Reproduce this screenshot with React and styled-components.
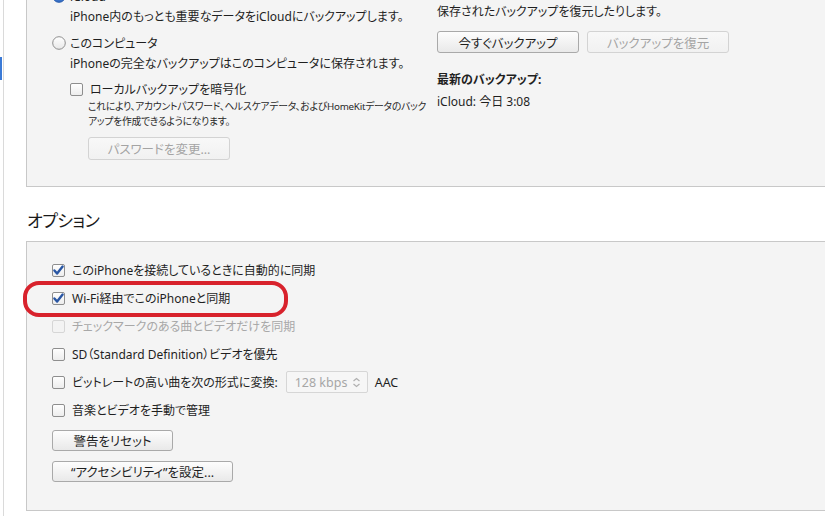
import React from 'react';
import styled, { createGlobalStyle } from 'styled-components';

const GlobalStyle = createGlobalStyle`
  html, body {
    margin: 0;
    padding: 0;
    background: #ffffff;
    overflow: hidden;
  }
  body {
    font-family: "Noto Sans", "Noto Sans CJK JP", sans-serif;
    font-feature-settings: "palt";
    color: #1f1f1f;
  }
`;

const Window = styled.div`
  display: flex;
  height: 516px;
  overflow: hidden;
`;

const Sidebar = styled.div`
  width: 3px;
  flex-shrink: 0;
  border-right: 1px solid #dadada;
  display: flex;
  flex-direction: column;
`;

const Indicator = styled.div`
  margin-top: 57px;
  width: 2px;
  height: 23px;
  background: #3b7ad6;
`;

const Main = styled.div`
  flex: 1;
  padding-left: 22px;
  margin-right: -12px;
`;

const Panel = styled.div`
  background: #f4f4f4;
  border: 1px solid #c8c8c8;
`;

const BackupPanel = styled(Panel)`
  margin-top: -30px;
  padding: 9px 0 26px 25px;
  display: flex;
  align-items: flex-start;
`;

const Column = styled.div`
  display: flex;
  flex-direction: column;
  align-items: flex-start;
  flex-shrink: 0;
  width: ${p => p.width || 'auto'};
  margin-top: ${p => p.offset || 0}px;
`;

const ChoiceRow = styled.div`
  display: flex;
  align-items: center;
  height: 20px;
  gap: ${p => p.gap || 4}px;
  margin-top: ${p => p.space || 0}px;
  margin-left: ${p => p.indent || 0}px;
  font-size: 12px;
  white-space: nowrap;
`;

const Description = styled.div`
  padding-left: ${p => p.indent || 0}px;
  font-size: 12px;
  line-height: ${p => p.lineHeight || 22}px;
  white-space: nowrap;
`;

const Note = styled.div`
  padding-left: 36px;
  font-size: 9.8px;
  letter-spacing: -0.25px;
  line-height: 15px;
  white-space: nowrap;
  color: #2a2a2a;
`;

const Strong = styled.div`
  margin-top: ${p => p.space || 0}px;
  font-size: 12px;
  font-weight: 700;
  line-height: 22px;
`;

const ButtonRow = styled.div`
  display: flex;
  gap: 8px;
  margin-top: 9px;
`;

const Button = styled.button`
  box-sizing: border-box;
  width: ${p => p.width}px;
  height: ${p => p.height || 22}px;
  margin-left: ${p => p.indent || 0}px;
  margin-top: ${p => p.space || 0}px;
  padding: 0;
  font-family: inherit;
  font-feature-settings: "palt";
  font-size: 12.5px;
  color: ${p => (p.disabled ? '#a4a4a4' : '#1f1f1f')};
  border: 1px solid ${p => (p.disabled ? '#d3d3d3' : '#a9a9a9')};
  border-radius: 3px;
  background: ${p =>
    p.disabled
      ? 'linear-gradient(#f8f8f8, #f1f1f1)'
      : 'linear-gradient(#fdfdfd, #e9e9e9)'};
  display: block;
`;

const SectionTitle = styled.h2`
  margin: 20px 0 6px 1px;
  font-size: 17px;
  font-weight: 400;
  letter-spacing: -0.5px;
  line-height: 28px;
  color: #1a1a1a;
`;

const OptionsPanel = styled(Panel)`
  padding: 14px 0 28px 25px;
  display: flex;
  flex-direction: column;
  align-items: flex-start;
`;

const OptionRow = styled.div`
  position: relative;
  display: flex;
  align-items: center;
  height: 28px;
  gap: 7px;
  font-size: 12px;
  white-space: nowrap;
  color: ${p => (p.disabled ? '#a8a8a8' : '#1f1f1f')};
`;

const Annotation = styled.div`
  position: absolute;
  left: -29px;
  top: -3px;
  width: 265px;
  height: 36px;
  box-sizing: border-box;
  border: 4.5px solid #d8222c;
  border-radius: 16px;
  pointer-events: none;
`;

const Select = styled.div`
  box-sizing: border-box;
  display: flex;
  align-items: center;
  justify-content: space-between;
  width: 82px;
  height: 22px;
  margin-left: 1px;
  padding: 0 6px 0 8px;
  border: 1px solid #d6d6d6;
  border-radius: 2px;
  background: #f6f6f6;
  color: #a6a6a6;
  font-size: 12.5px;
`;

const Suffix = styled.span`
  font-size: 12.5px;
`;

const Checkbox = ({ checked, disabled }) => (
  <svg width="13" height="13" viewBox="0 0 13 13" style={{ flexShrink: 0 }}>
    <defs>
      <linearGradient id="cbg" x1="0" y1="0" x2="0" y2="1">
        <stop offset="0" stopColor="#ffffff" />
        <stop offset="1" stopColor="#ececec" />
      </linearGradient>
    </defs>
    <rect
      x="0.5"
      y="0.5"
      width="12"
      height="12"
      rx="1.5"
      fill={disabled ? '#f3f3f3' : 'url(#cbg)'}
      stroke={disabled ? '#d6d6d6' : '#8e8e8e'}
    />
    {checked && (
      <path
        d="M2.4 6.4 L5.1 9.6 L10.6 2.6"
        fill="none"
        stroke="#2956a3"
        strokeWidth="2.4"
        strokeLinecap="round"
        strokeLinejoin="round"
      />
    )}
  </svg>
);

const Radio = ({ selected }) => (
  <svg width="14" height="14" viewBox="0 0 14 14" style={{ flexShrink: 0 }}>
    <defs>
      <linearGradient id="rbg" x1="0" y1="0" x2="0" y2="1">
        <stop offset="0" stopColor="#ffffff" />
        <stop offset="1" stopColor="#e8e8e8" />
      </linearGradient>
      <linearGradient id="rsel" x1="0" y1="0" x2="0" y2="1">
        <stop offset="0" stopColor="#6fa2e8" />
        <stop offset="1" stopColor="#2f69c2" />
      </linearGradient>
    </defs>
    <circle
      cx="7"
      cy="7"
      r="6.3"
      fill={selected ? 'url(#rsel)' : 'url(#rbg)'}
      stroke={selected ? '#2d5fae' : '#8e8e8e'}
    />
    {selected && <circle cx="7" cy="7" r="2.4" fill="#ffffff" />}
  </svg>
);

const Chevrons = () => (
  <svg width="9" height="11" viewBox="0 0 9 11">
    <path
      d="M1.5 4 L4.5 1.5 L7.5 4 M1.5 7 L4.5 9.5 L7.5 7"
      fill="none"
      stroke="#b0b0b0"
      strokeWidth="1.2"
    />
  </svg>
);

const options = [
  { label: 'このiPhoneを接続しているときに自動的に同期', checked: true },
  { label: 'Wi-Fi経由でこのiPhoneと同期', checked: true, marked: true },
  { label: 'チェックマークのある曲とビデオだけを同期', disabled: true },
  { label: 'SD（Standard Definition）ビデオを優先' },
  { label: 'ビットレートの高い曲を次の形式に変換:', bitrate: true },
  { label: '音楽とビデオを手動で管理' },
];

export default function App() {
  return (
    <>
      <GlobalStyle />
      <Window>
        <Sidebar>
          <Indicator />
        </Sidebar>
        <Main>
          <BackupPanel>
            <Column width="385px" offset={6}>
              <ChoiceRow>
                <Radio selected />
                <span>iCloud</span>
              </ChoiceRow>
              <Description indent={18}>
                iPhone内のもっとも重要なデータをiCloudにバックアップします。
              </Description>
              <ChoiceRow space={5}>
                <Radio />
                <span>このコンピュータ</span>
              </ChoiceRow>
              <Description indent={18}>
                iPhoneの完全なバックアップはこのコンピュータに保存されます。
              </Description>
              <ChoiceRow space={4} indent={18} gap={7}>
                <Checkbox />
                <span>ローカルバックアップを暗号化</span>
              </ChoiceRow>
              <Note>
                これにより、アカウントパスワード、ヘルスケアデータ、およびHomeKitデータのバック
                <br />
                アップを作成できるようになります。
              </Note>
              <Button disabled width={142} height={23} indent={36} space={8}>
                パスワードを変更...
              </Button>
            </Column>
            <Column>
              <Description lineHeight={21}>
                手動でこのコンピュータにiPhoneをバックアップしたり、このコンピュータに
                <br />
                保存されたバックアップを復元したりします。
              </Description>
              <ButtonRow>
                <Button width={142}>今すぐバックアップ</Button>
                <Button disabled width={142}>
                  バックアップを復元
                </Button>
              </ButtonRow>
              <Strong space={16}>最新のバックアップ:</Strong>
              <Description>iCloud: 今日 3:08</Description>
            </Column>
          </BackupPanel>

          <SectionTitle>オプション</SectionTitle>

          <OptionsPanel>
            {options.map(opt => (
              <OptionRow key={opt.label} disabled={opt.disabled}>
                <Checkbox checked={opt.checked} disabled={opt.disabled} />
                <span>{opt.label}</span>
                {opt.bitrate && (
                  <>
                    <Select>
                      <span>128 kbps</span>
                      <Chevrons />
                    </Select>
                    <Suffix>AAC</Suffix>
                  </>
                )}
                {opt.marked && <Annotation />}
              </OptionRow>
            ))}
            <Button width={121} height={21} space={6}>
              警告をリセット
            </Button>
            <Button width={181} height={21} space={10}>
              “アクセシビリティ”を設定...
            </Button>
          </OptionsPanel>
        </Main>
      </Window>
    </>
  );
}
